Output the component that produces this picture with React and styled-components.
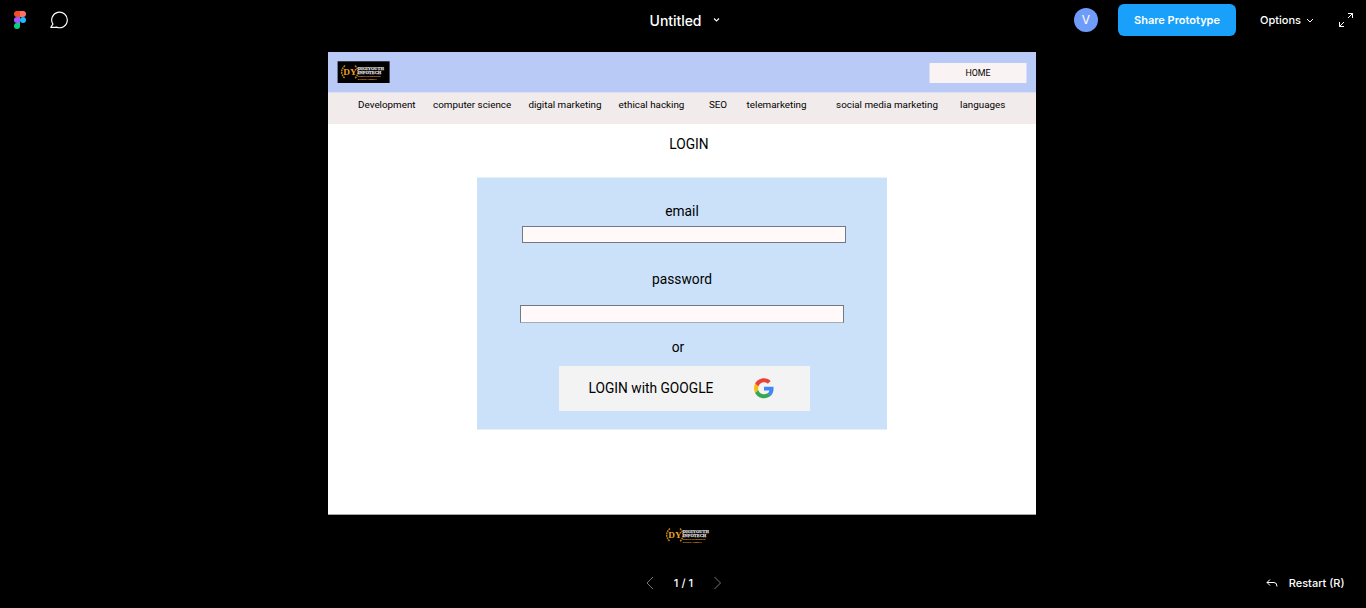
import React from "react";
import styled, { createGlobalStyle } from "styled-components";

const GlobalStyle = createGlobalStyle`
  * { box-sizing: border-box; }
  body { margin: 0; background: #000; overflow: hidden; }
  button { border: 0; padding: 0; background: none; font: inherit; color: inherit; display: block; }
`;

const Viewer = styled.div`
  width: 1366px;
  height: 608px;
  display: flex;
  flex-direction: column;
  align-items: center;
  background: #000;
  color: #fff;
  font-family: Inter, sans-serif;
  font-size: 11px;
  letter-spacing: 0.07px;
  font-weight: 500;
`;

const TopBar = styled.header`
  width: 100%;
  height: 40px;
  flex: none;
  display: grid;
  grid-template-columns: 1fr auto 1fr;
  align-items: center;
`;

const Tools = styled.div`
  display: flex;
  align-items: center;
  gap: 23px;
  padding-left: 13px;
`;

const FileTitle = styled.div`
  display: flex;
  align-items: center;
  gap: 12px;
  padding: 2px 0 0 4px;
  font-size: 14px;
  line-height: 20px;
  letter-spacing: -0.05px;
`;

const Actions = styled.div`
  display: flex;
  align-items: center;
  justify-content: flex-end;
  padding-right: 12px;
`;

const Avatar = styled.div`
  width: 24px;
  height: 24px;
  border-radius: 50%;
  background: #6f9cf8;
  text-align: center;
  line-height: 24px;
  font-size: 12px;
  font-weight: 400;
`;

const ShareButton = styled.button`
  width: 118px;
  height: 32px;
  margin-left: 20px;
  border-radius: 6px;
  background: #18a0fb;
  font-weight: 600;
`;

const Options = styled.button`
  width: 54px;
  display: flex;
  align-items: center;
  justify-content: space-between;
  margin: 0 24px;
`;

const Prototype = styled.main`
  width: 708px;
  height: 463px;
  margin: 12px 2px 0 0;
  flex: none;
  display: flex;
  flex-direction: column;
  background: #fff;
  border-bottom: 1px solid #a6a6a6;
  color: #000;
  font-family: Roboto, sans-serif;
  font-weight: 400;
  letter-spacing: 0;
`;

const SiteHeader = styled.div`
  height: 41px;
  flex: none;
  display: flex;
  justify-content: space-between;
  align-items: flex-start;
  padding: 9px 9px 0 9px;
  background: #b8caf5;
  border-bottom: 1px solid #dbdff0;
`;

const HomeButton = styled.button`
  width: 98px;
  height: 20px;
  margin-top: 2px;
  background: #f9f3f3;
  border: solid #d9def4;
  border-width: 0 1px;
  font-size: 8.85px;
  line-height: 20px;
`;

const SiteNav = styled.nav`
  height: 31px;
  flex: none;
  display: grid;
  grid-template-columns: 75px 95.3px 90.2px 90.3px 37.7px 89.5px 124px auto;
  padding: 6px 0 0 30.1px;
  background: #f1ebeb;
  font-size: 9.83px;
  line-height: 12px;
  white-space: nowrap;
`;

const PageTitle = styled.h1`
  margin: 12px 0 24px 14px;
  width: 694px;
  text-align: center;
  font-size: 13.77px;
  font-weight: 400;
  line-height: 17px;
`;

const LoginCard = styled.form`
  width: 410px;
  height: 253px;
  margin-left: 149px;
  display: flex;
  flex-direction: column;
  align-items: flex-start;
  padding-top: 25px;
  background: #cbe1f9;
  border: solid #e6f0fb;
  border-width: 1px 0;
  font-size: 13.77px;
  line-height: 17px;
`;

const Label = styled.label`
  width: 410px;
  text-align: center;
  padding-right: ${(p) => p.$shift || 0}px;
`;

const Field = styled.input`
  width: 324px;
  height: ${(p) => p.$height}px;
  margin: ${(p) => p.$margin};
  padding: 0 4px;
  border: 1px solid #737981;
  border-bottom-color: ${(p) => p.$edge || "#737981"};
  border-radius: 0;
  background: #fff9f9;
  outline: 0;
`;

const GoogleButton = styled.button`
  width: 251px;
  height: 45px;
  margin: 10px 0 0 82px;
  padding-left: 29.5px;
  display: flex;
  align-items: center;
  gap: 41px;
  background: #f3f3f3;
`;

const FooterMark = styled.div`
  height: 22px;
  margin: 9px 0 0 10px;
  display: flex;
`;

const BottomBar = styled.footer`
  width: 100%;
  height: 50px;
  margin-top: 12px;
  display: grid;
  grid-template-columns: 1fr auto 1fr;
  align-items: center;
`;

const Pager = styled.div`
  grid-column: 2;
  display: flex;
  align-items: center;
  gap: 19px;
  padding-left: 1px;
`;

const PageCount = styled.span`
  width: 21px;
  text-align: center;
  white-space: nowrap;
`;

const Restart = styled.button`
  justify-self: end;
  display: flex;
  align-items: center;
  gap: 11px;
  padding-right: 21.5px;
`;

const Line = styled.svg`
  display: block;
  flex: none;
  fill: none;
  stroke: ${(p) => p.$color || "#fff"};
  stroke-width: ${(p) => p.$weight || 1};
`;

const Drawing = styled.svg`
  display: block;
  flex: none;
`;

const FigmaMark = () => (
  <Drawing width="14" height="18" viewBox="0 0 14 18">
    <path d="M7 0H4a3 3 0 0 0 0 6h3z" fill="#f24e1e" />
    <path d="M7 0h3a3 3 0 0 1 0 6H7z" fill="#ff7262" />
    <path d="M7 6H4a3 3 0 0 0 0 6h3z" fill="#a259ff" />
    <circle cx="10" cy="9" r="3" fill="#1abcfe" />
    <path d="M7 12H4a3 3 0 1 0 3 3z" fill="#0acf83" />
  </Drawing>
);

const CommentIcon = () => (
  <Line width="19" height="18" viewBox="0 0 19 18" $weight="1.15">
    <path d="M.8 16.3 2.9 13.1A7.8 7.8 0 1 1 6.4 16.1Q5.4 16.3 4.4 16.3Z" strokeLinejoin="round" />
  </Line>
);

const GoogleMark = () => (
  <Drawing width="20" height="21" viewBox="0 0 48 49">
    <path fill="#ea4335" d="M24 9.5c3.54 0 6.71 1.22 9.21 3.6l6.85-6.85C35.9 2.38 30.47 0 24 0 14.62 0 6.51 5.38 2.56 13.22l7.98 6.19C12.43 13.72 17.74 9.5 24 9.5z" />
    <path fill="#4285f4" d="M46.98 24.55c0-1.57-.15-3.09-.38-4.55H24v9.02h12.94c-.58 2.96-2.26 5.48-4.78 7.18l7.73 6c4.51-4.18 7.09-10.36 7.09-17.65z" />
    <path fill="#fbbc05" d="M10.53 28.59A14.5 14.5 0 0 1 9.77 24c0-1.6.27-3.14.76-4.59l-7.98-6.19A23.9 23.9 0 0 0 0 24c0 3.88.92 7.54 2.56 10.78l7.97-6.19z" />
    <path fill="#34a853" d="M24 48c6.48 0 11.93-2.13 15.89-5.81l-7.73-6c-2.15 1.45-4.92 2.3-8.16 2.3-6.26 0-11.57-4.22-13.47-9.91l-7.98 6.19C6.51 42.62 14.62 48 24 48z" />
  </Drawing>
);

const CompanyLogo = () => (
  <Drawing width="53" height="22" viewBox="0 0 53 22" fontFamily="Liberation Serif, serif" fontWeight="700">
    <rect x=".6" y=".3" width="52" height="21.7" fill="#000" />
    <g fill="none" stroke="#c08014" strokeWidth="1.5" strokeDasharray="1.8 .7">
      <path d="M8 4.5Q1.3 10.8 8 17.5" />
      <path d="M18 4.5Q24 10.8 18 17.5" />
    </g>
    <text x="6.2" y="14.2" fontSize="9" fill="#eda126" textLength="13.5" lengthAdjust="spacingAndGlyphs">DY</text>
    <g stroke="#ccc" strokeWidth=".25">
      <text x="20.8" y="8.8" fontSize="4.9" fill="#eee" textLength="26" lengthAdjust="spacingAndGlyphs">DIGIYOUTH</text>
      <text x="20.8" y="13.4" fontSize="4.9" fill="#eee" textLength="23.5" lengthAdjust="spacingAndGlyphs">INFOTECH</text>
    </g>
    <g stroke="#b9790f" strokeWidth=".15">
      <text x="20.8" y="16.1" fontSize="2.7" fill="#d8921c" textLength="22.5" lengthAdjust="spacingAndGlyphs">DIGITAL MARKETING</text>
      <text x="20.8" y="18.5" fontSize="2.4" fill="#c98512" textLength="19" lengthAdjust="spacingAndGlyphs">SCHOOL | AGENCY</text>
    </g>
  </Drawing>
);

const topics = [
  "Development",
  "computer science",
  "digital marketing",
  "ethical hacking",
  "SEO",
  "telemarketing",
  "social media marketing",
  "languages",
];

export default function App() {
  return (
    <Viewer>
      <GlobalStyle />
      <TopBar>
        <Tools>
          <FigmaMark />
          <CommentIcon />
        </Tools>
        <FileTitle>
          Untitled
          <Line width="7" height="8" viewBox="0 0 7 8" $weight="1.1"><path d="m1 1.5 2.5 2.5 2.5-2.5" /></Line>
        </FileTitle>
        <Actions>
          <Avatar>V</Avatar>
          <ShareButton>Share Prototype</ShareButton>
          <Options>
            Options
            <Line width="8" height="6" viewBox="0 0 8 6"><path d="m1 2 3 3 3-3" /></Line>
          </Options>
          <Line width="16" height="16" viewBox="0 0 16 16">
            <path d="M10 1.5h4.5V6M14.5 1.5l-4.500 4.500M1.5 10v4.5H6M1.5 14.5l4.500-4.500" />
          </Line>
        </Actions>
      </TopBar>

      <Prototype>
        <SiteHeader>
          <CompanyLogo />
          <HomeButton>HOME</HomeButton>
        </SiteHeader>
        <SiteNav>
          {topics.map((topic) => (
            <span key={topic}>{topic}</span>
          ))}
        </SiteNav>
        <PageTitle>LOGIN</PageTitle>
        <LoginCard>
          <Label htmlFor="email">email</Label>
          <Field id="email" $height={17} $margin="6px 0 28px 45px" />
          <Label htmlFor="password">password</Label>
          <Field id="password" type="password" $height={18} $edge="#a3adb8" $margin="17px 0 16px 43px" />
          <Label as="div" $shift={8}>or</Label>
          <GoogleButton type="button">
            LOGIN with GOOGLE
            <GoogleMark />
          </GoogleButton>
        </LoginCard>
      </Prototype>

      <FooterMark>
        <CompanyLogo />
      </FooterMark>

      <BottomBar>
        <Pager>
          <Line width="9" height="14" viewBox="0 0 9 14" $color="#777"><path d="M8 1 2 7l6 6" /></Line>
          <PageCount>1 / 1</PageCount>
          <Line width="9" height="14" viewBox="0 0 9 14" $color="#777"><path d="m1.500 1 6 6-6 6" /></Line>
        </Pager>
        <Restart>
          <Line width="12" height="8" viewBox="0 0 12 8"><path d="M4 .5 1 3.5l3 3M1 3.5h7Q11 3.5 11 7.5" /></Line>
          Restart (R)
        </Restart>
      </BottomBar>
    </Viewer>
  );
}
